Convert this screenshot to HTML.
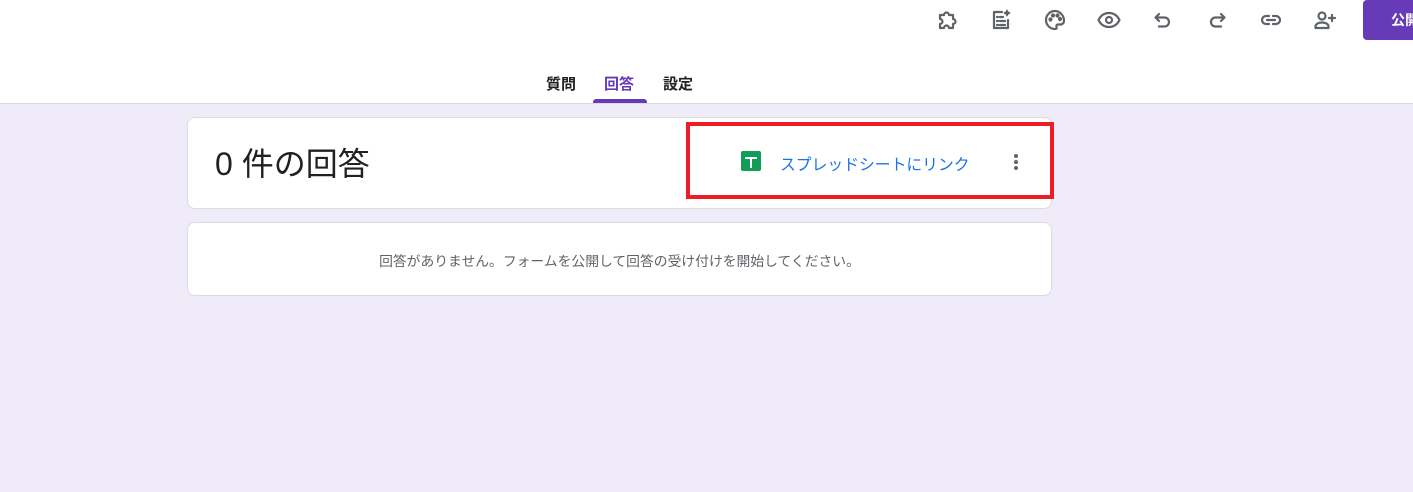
<!DOCTYPE html>
<html><head><meta charset="utf-8"><style>
body{margin:0;width:1413px;height:492px;overflow:hidden;background:#efebf8;font-family:"Liberation Sans","Noto Sans CJK JP",sans-serif;position:relative}
.hdr{position:absolute;left:0;top:0;width:1413px;height:103px;background:#fff;border-bottom:1px solid #dadce0}
.ic{position:absolute;top:8px;width:24px;height:24px}
.ic svg{width:24px;height:24px;fill:none;stroke:#5f6368;stroke-width:2.2;stroke-linecap:round;stroke-linejoin:round}
.pub{position:absolute;left:1363px;top:0;width:70px;height:40px;background:#673ab7;border-radius:4px;color:#fff;font-size:14px;font-weight:bold;line-height:40px;padding-left:28px;box-sizing:border-box}
.tab{position:absolute;top:73px;font-size:15px;font-weight:bold;color:#202124}
.card{position:absolute;left:187px;width:865px;background:#fff;border:1px solid #dadce0;border-radius:8px;box-sizing:border-box}
</style></head><body>
<div class="hdr">
<div class="ic" style="left:935px"><svg viewBox="0 0 24 24"><path d="M5 7h4a2.5 2.5 0 015 0h4v4a2.5 2.5 0 010 5v4h-4a2.5 2.5 0 00-5 0H5v-4a2.5 2.5 0 000-5z"/></svg></div>
<div class="ic" style="left:989px"><svg viewBox="0 0 24 24"><path d="M13 4H5v16h14v-8"/><path d="M8 9h1M11 9h3M8 13h1M11 13h5M8 17h1M11 17h5"/><path d="M18 2l1 2 2 1-2 1-1 2-1-2-2-1 2-1z" fill="#5f6368" stroke-width="1"/></svg></div>
<div class="ic" style="left:1043px"><svg viewBox="0 0 24 24"><path d="M12 3a9 9 0 000 18c1.5 0 2-1 1.5-2s0-2.5 1.5-2.5h2.5A3.5 3.5 0 0021 13c0-5.5-4-10-9-10z"/><circle cx="7.5" cy="11.5" r="1" fill="#5f6368"/><circle cx="10" cy="7.5" r="1" fill="#5f6368"/><circle cx="14.5" cy="7.5" r="1" fill="#5f6368"/><circle cx="17" cy="11" r="1" fill="#5f6368"/></svg></div>
<div class="ic" style="left:1097px"><svg viewBox="0 0 24 24"><path d="M1.5 12C4 7 8 5 12 5s8 2 10.5 7c-2.5 5-6.5 7-10.5 7S4 17 1.5 12z"/><circle cx="12" cy="12" r="3"/></svg></div>
<div class="ic" style="left:1151px"><svg viewBox="0 0 24 24"><path d="M8 6L4.5 9.5 8 13"/><path d="M5 9.5h8.5a4.5 4.5 0 010 9H8"/></svg></div>
<div class="ic" style="left:1205px"><svg viewBox="0 0 24 24"><path d="M16 6l3.5 3.5L16 13"/><path d="M19 9.5h-8.5a4.5 4.5 0 000 9H16"/></svg></div>
<div class="ic" style="left:1259px"><svg viewBox="0 0 24 24"><path d="M10 8H7a4 4 0 000 8h3M14 8h3a4 4 0 010 8h-3M8 12h8"/></svg></div>
<div class="ic" style="left:1313px"><svg viewBox="0 0 24 24"><circle cx="9" cy="8" r="3.5"/><path d="M2.5 20v-1.5c0-2.5 3-4 6.5-4s6.5 1.5 6.5 4V20z"/><path d="M19 7v6M16 10h6"/></svg></div>
<div class="pub">公開</div>
<div class="tab" style="left:546px">質問</div>
<div class="tab" style="left:604px;color:#673ab7">回答</div>
<div class="tab" style="left:663px">設定</div>
<div style="position:absolute;left:593px;top:99px;width:54px;height:4px;background:#673ab7;border-radius:3px 3px 0 0"></div>
</div>
<div class="card" style="top:117px;height:92px">
<div style="position:absolute;left:27px;top:21px;font-size:32px;color:#202124">0 件の回答</div>
<div style="position:absolute;left:553px;top:33px;width:20px;height:20px;background:#0f9d58;border-radius:2px"><div style="position:absolute;left:4px;top:6px;width:12px;height:2px;background:#fff"></div><div style="position:absolute;left:9px;top:6px;width:2px;height:11px;background:#fff"></div></div>
<div style="position:absolute;left:592px;top:34px;font-size:15.8px;color:#1a73e8">スプレッドシートにリンク</div>
<div style="position:absolute;left:826px;top:36px;width:4px;height:4px;border-radius:2px;background:#5f6368;box-shadow:0 6px 0 #5f6368,0 12px 0 #5f6368"></div>
</div>
<div style="position:absolute;left:686px;top:122px;width:368px;height:77px;border:4px solid #ee1c25;box-sizing:border-box"></div>
<div class="card" style="top:222px;height:74px">
<div style="position:absolute;left:0;width:100%;top:27px;text-align:center;font-size:13.8px;color:#5f6368">回答がありません。フォームを公開して回答の受け付けを開始してください。</div>
</div>
</body></html>
